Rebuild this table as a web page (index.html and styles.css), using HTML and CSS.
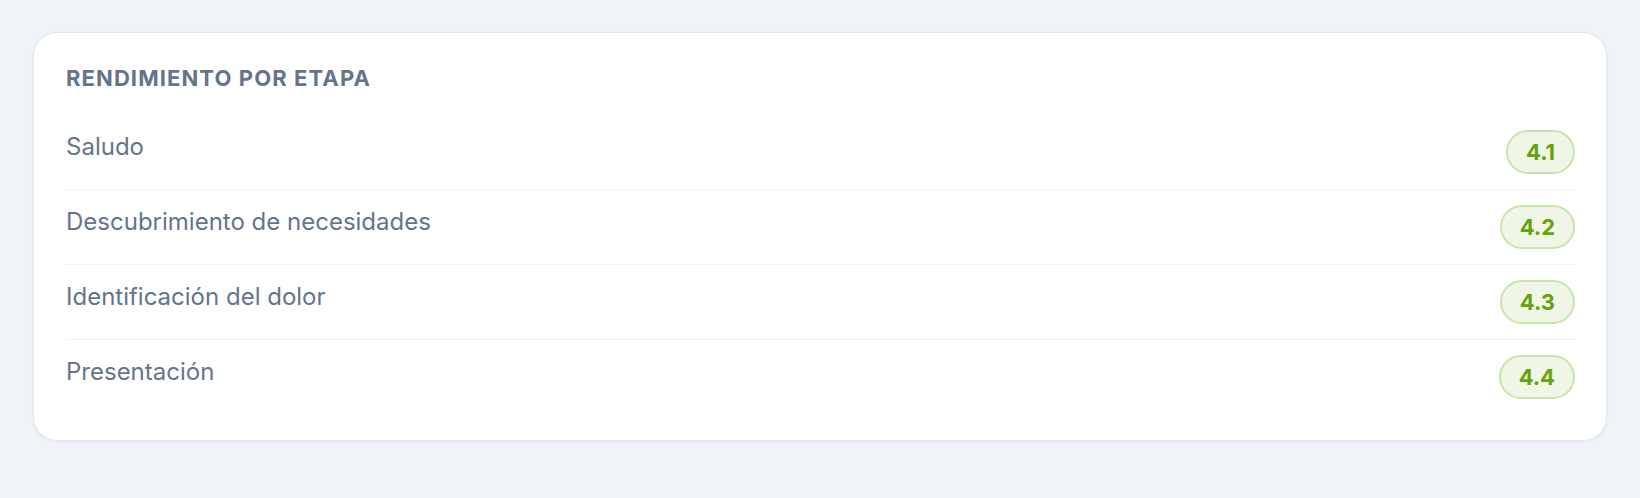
FILE: index.html
```html
<!DOCTYPE html>
<html lang="es">
<head>
<meta charset="utf-8">
<title>Rendimiento por etapa</title>
<link rel="stylesheet" href="styles.css">
</head>
<body>
<section class="card">
  <h2 class="card-title">RENDIMIENTO POR ETAPA</h2>
  <ul class="stage-list">
    <li class="stage-row"><span class="stage-name">Saludo</span><span class="score">4.1</span></li>
    <li class="stage-row"><span class="stage-name">Descubrimiento de necesidades</span><span class="score">4.2</span></li>
    <li class="stage-row"><span class="stage-name">Identificación del dolor</span><span class="score">4.3</span></li>
    <li class="stage-row"><span class="stage-name">Presentación</span><span class="score">4.4</span></li>
  </ul>
</section>
</body>
</html>
```

FILE: styles.css
```css
* { box-sizing: border-box; }

html, body {
  margin: 0;
  padding: 0;
}

body {
  background: #f0f4f9;
  font-family: Inter, "Noto Sans", "Liberation Sans", sans-serif;
  padding: 32px 33px;
  min-height: 498px;
}

.card {
  background: #ffffff;
  border: 1px solid #e2e8f0;
  border-radius: 24px;
  padding: 32px 31px 26px 32px;
  box-shadow: 0 1px 3px rgba(15, 23, 42, 0.05);
}

.card-title {
  margin: 0 0 24px;
  font-size: 22px;
  font-weight: 700;
  letter-spacing: 0.05em;
  line-height: normal;
  color: #64748b;
}

.stage-list {
  list-style: none;
  margin: 0;
  padding: 0;
}

.stage-row {
  display: flex;
  justify-content: space-between;
  align-items: flex-start;
  padding: 15px 0;
  border-bottom: 1px solid #eef2f6;
}

.stage-row:last-child {
  border-bottom: none;
}

.stage-name {
  font-size: 24px;
  line-height: 33px;
  color: #64748b;
}

.score {
  display: inline-flex;
  align-items: center;
  justify-content: center;
  height: 44px;
  padding: 0 18px;
  border: 2px solid #c9e3aa;
  border-radius: 999px;
  background: #eff6e5;
  color: #65a30d;
  font-size: 22px;
  font-weight: 700;
}
```
